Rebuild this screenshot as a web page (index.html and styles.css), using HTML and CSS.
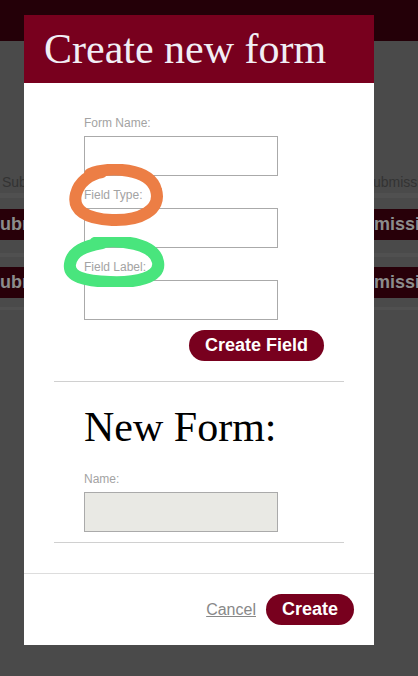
FILE: index.html
```html
<!DOCTYPE html>
<html lang="en">
<head>
<meta charset="utf-8">
<title>Create new form</title>
<link rel="stylesheet" href="styles.css">
</head>
<body>
<div class="page">
  <div class="topbar"></div>
  <div class="subs">
    <div class="subs-head">
      <span class="cell-left">Submission</span>
      <span class="cell-right">Submission</span>
    </div>
    <div class="band band-a"></div>
    <div class="bar">
      <span class="bar-left">Submission</span>
      <span class="bar-right">Submission</span>
    </div>
    <div class="band band-b"></div>
    <div class="bar">
      <span class="bar-left">Submission</span>
      <span class="bar-right">Submission</span>
    </div>
    <div class="band band-c"></div>
  </div>
</div>

<div class="modal">
  <div class="modal-header">
    <h1 class="modal-title">Create new form</h1>
  </div>
  <div class="modal-body">
    <div class="field">
      <label class="field-label">Form Name:</label>
      <input class="field-input" type="text">
    </div>
    <div class="field">
      <label class="field-label">Field Type:</label>
      <input class="field-input" type="text">
    </div>
    <div class="field field-last">
      <label class="field-label">Field Label:</label>
      <input class="field-input" type="text">
    </div>
    <div class="actions-row">
      <button class="pill-btn" type="button">Create Field</button>
    </div>
    <div class="divider divider-top"></div>
    <h2 class="section-title">New Form:</h2>
    <div class="field field-last">
      <label class="field-label">Name:</label>
      <input class="field-input field-disabled" type="text" disabled>
    </div>
    <div class="divider divider-bottom"></div>
  </div>
  <div class="modal-footer">
    <a class="cancel-link" href="#">Cancel</a>
    <button class="pill-btn" type="button">Create</button>
  </div>
</div>

<svg class="annotations" width="418" height="676" viewBox="0 0 418 676" xmlns="http://www.w3.org/2000/svg">
  <defs>
    <filter id="soft" x="-10%" y="-10%" width="120%" height="120%">
      <feGaussianBlur stdDeviation="0.7"/>
    </filter>
  </defs>
  <path d="M 90 174 C 110 166, 150 168, 156 190 C 162 210, 140 221, 112 220 C 86 219, 72 210, 76 194 C 79 182, 90 174, 102 172" fill="none" stroke="#ec7e45" stroke-width="12" stroke-linecap="round" stroke-linejoin="round" filter="url(#soft)"/>
  <path d="M 95 243 C 120 238, 155 244, 158 262 C 161 278, 135 283, 110 282 C 85 281, 68 277, 70 264 C 72 251, 85 246, 102 243" fill="none" stroke="#48e57d" stroke-width="12" stroke-linecap="round" stroke-linejoin="round" filter="url(#soft)"/>
</svg>
</body>
</html>
```
FILE: styles.css
```css
html, body {
  margin: 0;
  padding: 0;
}

body {
  width: 418px;
  height: 676px;
  overflow: hidden;
  background: #4a4a4a;
  font-family: "Liberation Sans", Arial, sans-serif;
}

.page {
  width: 418px;
  height: 676px;
  overflow: hidden;
}

.topbar {
  height: 41px;
  background: #240008;
}

.subs {
  margin-top: 131px;
}

.subs-head {
  height: 20px;
  display: flex;
  justify-content: space-between;
  font-size: 14px;
  line-height: 20px;
  color: #333333;
  white-space: nowrap;
  overflow: hidden;
}

.cell-left {
  margin-left: 2px;
}

.cell-right {
  margin-right: -18px;
}

.band {
  background: #505050;
}

.band-a {
  height: 5px;
  margin-top: 1px;
  margin-bottom: 11px;
}

.band-b {
  height: 4px;
  margin-top: 13px;
  margin-bottom: 10px;
}

.band-c {
  height: 3px;
  margin-top: 9px;
}

.bar {
  height: 31px;
  display: flex;
  justify-content: space-between;
  background: #280009;
  font-size: 18px;
  font-weight: bold;
  line-height: 31px;
  color: #8c8c8c;
  white-space: nowrap;
  overflow: hidden;
}

.bar-left {
  margin-left: -12px;
}

.bar-right {
  margin-right: -24px;
}

/* Modal */
.modal {
  position: absolute;
  top: 15px;
  left: 24px;
  width: 350px;
  background: #ffffff;
  display: flex;
  flex-direction: column;
}

.modal-header {
  height: 68px;
  box-sizing: border-box;
  padding: 10px 20px;
  background: #78001e;
}

.modal-title {
  margin: 0;
  font-family: "Liberation Serif", "Times New Roman", serif;
  font-weight: normal;
  font-size: 42px;
  line-height: 48px;
  color: #f1eef5;
  white-space: nowrap;
}

.modal-body {
  padding: 33px 30px 30px;
  display: flex;
  flex-direction: column;
}

.field {
  display: flex;
  flex-direction: column;
  align-items: flex-start;
  margin-left: 30px;
  margin-bottom: 12px;
}

.field-last {
  margin-bottom: 0;
}

.field-label {
  font-size: 12px;
  line-height: 14px;
  color: #a3a3a3;
  margin-bottom: 6px;
}

.field-input {
  box-sizing: border-box;
  width: 194px;
  height: 40px;
  margin: 0;
  border: 1px solid #aaaaaa;
  border-radius: 0;
  background: #ffffff;
  padding: 0 6px;
  font-family: "Liberation Sans", Arial, sans-serif;
  font-size: 14px;
}

.field-disabled {
  background: #e9e9e4;
}

.actions-row {
  display: flex;
  justify-content: flex-end;
  margin-top: 10px;
  margin-right: 20px;
}

.pill-btn {
  box-sizing: border-box;
  height: 31px;
  margin: 0;
  padding: 0 16px;
  border: none;
  border-radius: 16px;
  background: #78001e;
  color: #ffffff;
  font-family: "Liberation Sans", Arial, sans-serif;
  font-size: 18px;
  font-weight: bold;
  line-height: 31px;
  white-space: nowrap;
  cursor: pointer;
}

.divider {
  height: 1px;
  background: #d0d0d0;
}

.divider-top {
  margin-top: 20px;
}

.divider-bottom {
  margin-top: 10px;
}

.section-title {
  margin: 21px 0 21px 30px;
  font-family: "Liberation Serif", "Times New Roman", serif;
  font-weight: normal;
  font-size: 42px;
  line-height: 48px;
  color: #000000;
  white-space: nowrap;
}

.modal-footer {
  border-top: 1px solid #dddddd;
  padding: 20px;
  display: flex;
  justify-content: flex-end;
  align-items: center;
  gap: 10px;
}

.cancel-link {
  font-size: 16px;
  line-height: 20px;
  color: #888888;
  text-decoration: underline;
}

.annotations {
  position: absolute;
  top: 0;
  left: 0;
  pointer-events: none;
}
```
